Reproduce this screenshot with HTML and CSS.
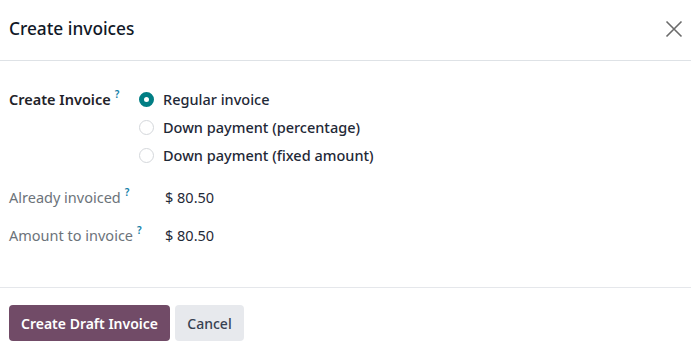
FILE: index.html
```html
<!DOCTYPE html>
<html>
<head>
<meta charset="utf-8">
<link rel="stylesheet" href="styles.css">
</head>
<body>
<div class="dialog">
  <header class="head">
    <h1 class="title">Create invoices</h1>
    <button class="close" aria-label="Close">
      <svg width="18" height="18" viewBox="0 0 18 18"><path d="M1.5 1.5 L16.5 16.5 M16.5 1.5 L1.5 16.5" stroke="#6b6b6b" stroke-width="1.6" fill="none"/></svg>
    </button>
  </header>
  <main class="content">
    <div class="row">
      <div class="label strong">Create Invoice<sup class="help">?</sup></div>
      <div class="radios">
        <label class="radio"><span class="dot checked"></span>Regular invoice</label>
        <label class="radio"><span class="dot"></span>Down payment (percentage)</label>
        <label class="radio"><span class="dot"></span>Down payment (fixed amount)</label>
      </div>
    </div>
    <div class="row info first">
      <div class="label muted">Already invoiced<sup class="help">?</sup></div>
      <div class="value">$ 80.50</div>
    </div>
    <div class="row info">
      <div class="label muted">Amount to invoice<sup class="help">?</sup></div>
      <div class="value">$ 80.50</div>
    </div>
  </main>
  <footer class="foot">
    <button class="btn primary">Create Draft Invoice</button>
    <button class="btn secondary">Cancel</button>
  </footer>
</div>
</body>
</html>
```
FILE: styles.css
```css
* { box-sizing: border-box; }
html, body { margin: 0; background: #fff; }
body { font-family: "Noto Sans", "Open Sans", sans-serif; color: #212529; font-size: 14px; }
.dialog { width: 691px; height: 346px; display: flex; flex-direction: column; }
.head { height: 61px; display: flex; align-items: center; justify-content: space-between; padding: 0 8px 3px 9px; border-bottom: 1px solid #dee2e6; }
.title { margin: 0; font-size: 17.3px; font-weight: 500; color: #111827; line-height: 1; }
.close { border: 0; background: none; padding: 0; width: 18px; height: 18px; display: flex; }
.content { padding: 24px 9px 0 9px; flex: 1; }
.row { display: flex; }
.label { width: 130px; flex: none; line-height: 28px; font-size: 14.5px; }
.strong { font-weight: 600; color: #1f2329; }
.muted { color: #6c737a; }
.help { color: #0f7ea7; font-size: 10px; margin-left: 4px; vertical-align: top; line-height: 18px; font-weight: 600; }
.radios { display: flex; flex-direction: column; }
.radio { display: flex; align-items: center; height: 28px; font-size: 14.5px; font-weight: 500; color: #1f2937; }
.dot { width: 15px; height: 15px; border-radius: 50%; border: 1px solid #d4d7db; margin-right: 9px; flex: none; }
.dot.checked { border: 5px solid #017e84; }
.info .label { width: 156px; }
.info.first { margin-top: 14px; }
.info + .info { margin-top: 10px; }
.value { line-height: 28px; font-size: 14.5px; color: #1f2937; }
.foot { height: 59px; border-top: 1px solid #e5e7eb; padding: 17px 9px 0 9px; display: flex; gap: 5px; align-items: flex-start; }
.btn { font-family: inherit; font-size: 14px; font-weight: 600; border: 0; border-radius: 4px; height: 36px; padding: 0 8px; white-space: nowrap; }
.primary { background: #714b67; color: #fff; width: 161px; }
.secondary { background: #e7e9ed; color: #374151; font-weight: 500; width: 69px; }
```
